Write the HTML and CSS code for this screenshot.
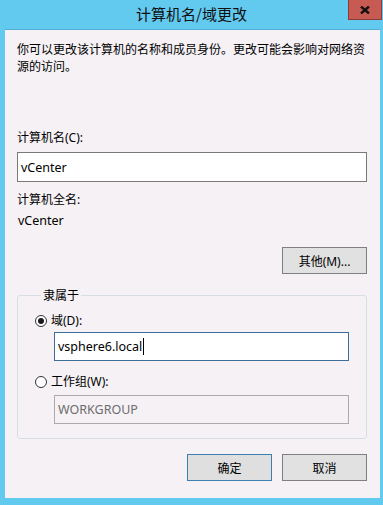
FILE: index.html
```html
<!DOCTYPE html>
<html lang="zh">
<head>
<meta charset="utf-8">
<title>计算机名/域更改</title>
<link rel="stylesheet" href="styles.css">
</head>
<body>
<div class="window">
  <div class="titlebar">
    <span class="title">计算机名/域更改</span>
    <div class="close">
      <svg width="10" height="8" viewBox="0 0 10 8"><path d="M1 0.5 L9 7.5 M9 0.5 L1 7.5" stroke="#111" stroke-width="2.4"/></svg>
    </div>
  </div>
  <div class="client">
    <p class="intro">你可以更改该计算机的名称和成员身份。更改可能会影响对网络资源的访问。</p>
    <div class="label name-label">计算机名(C):</div>
    <div class="field">vCenter</div>
    <div class="label full-label">计算机全名:</div>
    <div class="value">vCenter</div>
    <div class="row-right more-row">
      <div class="btn">其他(M)...</div>
    </div>
    <fieldset class="group">
      <legend>隶属于</legend>
      <div class="radio-row">
        <span class="radio checked"></span><span>域(D):</span>
      </div>
      <div class="field indent focus">vsphere6.local<span class="caret"></span></div>
      <div class="radio-row second">
        <span class="radio"></span><span>工作组(W):</span>
      </div>
      <div class="field indent disabled">WORKGROUP</div>
    </fieldset>
    <div class="row-right actions">
      <div class="btn default">确定</div>
      <div class="btn">取消</div>
    </div>
  </div>
</div>
</body>
</html>
```
FILE: styles.css
```css
* { box-sizing: border-box; }
html, body { margin: 0; padding: 0; }
body {
  width: 383px;
  height: 505px;
  background: #62c9ef;
  font-family: "Noto Sans", "Noto Sans CJK SC", sans-serif;
  font-size: 12px;
  color: #000;
  overflow: hidden;
}
.window {
  width: 383px;
  height: 505px;
  background: #62c9ef;
  position: relative;
  display: flex;
  flex-direction: column;
}
.titlebar {
  height: 29px;
  display: flex;
  justify-content: center;
  align-items: flex-start;
}
.title {
  font-family: "Noto Sans CJK SC", sans-serif;
  font-size: 15px;
  line-height: 19px;
  padding-top: 4px;
  color: #111;
}
.close {
  position: absolute;
  top: 0;
  left: 348px;
  width: 34px;
  height: 20px;
  background: #c75a52;
  border: 1px solid #8c3a36;
  border-top: none;
  display: flex;
  align-items: center;
  justify-content: center;
}
.client {
  margin: 0 3px 7px 5px;
  height: 469px;
  background: #f5f1f5;
  border-top: 1px solid #55aeda;
  padding: 10px 13px 0 12px;
  display: flex;
  flex-direction: column;
}
.intro {
  margin: 0;
  line-height: 17px;
  font-family: "Noto Sans CJK SC", sans-serif;
}
.label, .value, .radio-row, legend {
  line-height: 17px;
}
.name-label { margin-top: 55px; }
.field {
  height: 30px;
  margin-top: 6px;
  background: #fff;
  border: 1px solid #7a7a7a;
  padding: 0 3px;
  display: flex;
  align-items: center;
  font-size: 12.5px;
}
.full-label { margin-top: 9px; }
.value { margin-top: 4px; padding-left: 1px; font-size: 12.5px; }
.row-right {
  display: flex;
  justify-content: flex-end;
  gap: 10px;
}
.more-row { margin-top: 18px; }
.btn {
  width: 85px;
  height: 27px;
  background: #e1e1e1;
  border: 1px solid #7f7f7f;
  display: flex;
  align-items: center;
  justify-content: center;
}
.btn.default { border-color: #3c7fb1; background: #dfdfdf; }
.group {
  margin: 13px 0 0 0;
  padding: 0 17px 14px 17px;
  border: 1px solid #d6dde3;
  border-radius: 3px;
  min-width: 0;
}
.group legend {
  padding: 0 2px;
  margin-left: 6px;
}
.radio-row {
  display: flex;
  align-items: center;
  gap: 4px;
  margin-top: 8px;
}
.radio-row.second { margin-top: 12px; }
.radio {
  width: 12px;
  height: 12px;
  border: 1px solid #333;
  border-radius: 50%;
  background: #fff;
  display: flex;
  align-items: center;
  justify-content: center;
}
.radio.checked::after {
  content: "";
  width: 6px;
  height: 6px;
  border-radius: 50%;
  background: #1a1a1a;
}
.field.indent {
  margin-left: 19px;
  height: 29px;
  margin-top: 3px;
}
.field.focus { border-color: #3b6e99; }
.caret {
  display: inline-block;
  width: 1px;
  height: 17px;
  background: #000;
  margin-left: 1px;
}
.field.disabled {
  background: #f5f1f5;
  border-color: #ababab;
  color: #6d6d6d;
  margin-top: 5px;
}
.actions { margin-top: 15px; }
```
